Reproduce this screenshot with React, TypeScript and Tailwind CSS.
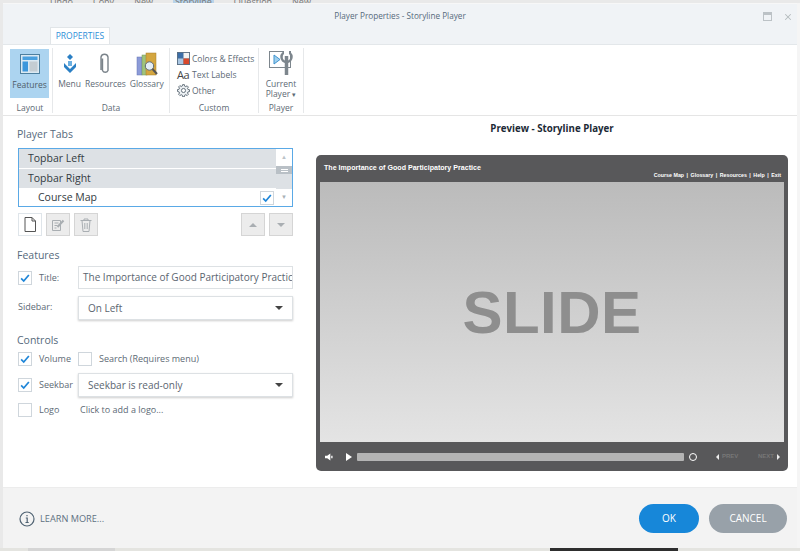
import { X } from "lucide-react";

const sans = "font-['Open_Sans','Liberation_Sans',sans-serif]";

function Check({ on = false }: { on?: boolean }) {
  return (
    <span className="flex size-[14px] shrink-0 items-center justify-center border border-[#cfd6dc] bg-white">
      {on ? (
        <svg viewBox="0 0 14 14" className="size-[12px]" fill="none" stroke="#1f86d8" strokeWidth="2">
          <path d="M2.5 7.5 5.5 10.5 11.5 3.5" />
        </svg>
      ) : null}
    </span>
  );
}

function Select({ label }: { label: string }) {
  return (
    <div className="flex h-[24px] w-[215px] items-center justify-between border border-[#dde1e4] bg-white px-[9px] text-[10px] text-[#5b6570] shadow-[0_1px_2px_rgba(0,0,0,0.2)]">
      <span>{label}</span>
      <span className="h-0 w-0 border-x-[4px] border-t-[4px] border-x-transparent border-t-[#444]" />
    </div>
  );
}

function SectionLabel({ children }: { children: string }) {
  return <div className="text-[10.5px] leading-[14px] text-[#566a7c]">{children}</div>;
}

function RibbonItem({ icon, label }: { icon: React.ReactNode; label: string }) {
  return (
    <div className="flex flex-col items-center">
      <div className="flex h-[26px] items-center justify-center">{icon}</div>
      <span className="text-[8.5px] leading-[13px] whitespace-nowrap text-[#5d6a75]">{label}</span>
    </div>
  );
}

function GroupLabel({ children }: { children: string }) {
  return <div className="text-center text-[8.5px] leading-[12px] text-[#5d6a75]">{children}</div>;
}

function FeaturesIcon() {
  return (
    <svg viewBox="0 0 20 20" className="size-[20px]">
      <rect x="0.5" y="0.5" width="19" height="19" fill="#dbe9f3" stroke="#4d7f9f" />
      <rect x="2.5" y="2.5" width="15" height="3.5" fill="#4aa0df" />
      <rect x="2.5" y="7.5" width="5.5" height="10" fill="#3d97dc" />
      <rect x="9.5" y="7.5" width="8" height="10" fill="#c4ccd2" />
    </svg>
  );
}

function MenuIcon() {
  return (
    <svg viewBox="0 0 14 20" className="h-[20px] w-[14px]" fill="none">
      <path d="M7 0 10 3 7 6 4 3Z" fill="#2a7fc4" />
      <path d="M5 7h4v5H5Z" fill="#6aaee0" />
      <path d="M1 9 7 15 13 9 13 13 7 19 1 13Z" fill="#2a7fc4" />
    </svg>
  );
}

function ClipIcon() {
  return (
    <svg viewBox="0 0 12 24" className="h-[24px] w-[12px]" fill="none" stroke="#7a838a" strokeWidth="1.4">
      <path d="M3.5 6.5v12a3 3 0 0 0 5.5 0V5a3.6 3.6 0 0 0-7 0v13" />
    </svg>
  );
}

function GlossaryIcon() {
  return (
    <svg viewBox="0 0 22 25" className="h-[25px] w-[22px]">
      <rect x="1" y="5" width="5" height="18" fill="#8c9bd8" stroke="#6475b4" strokeWidth="0.5" />
      <rect x="6" y="3" width="5" height="20" fill="#9fc37c" stroke="#74975a" strokeWidth="0.5" />
      <rect x="10" y="1" width="10" height="22" fill="#d4a63f" stroke="#a67e28" strokeWidth="0.5" />
      <circle cx="13.5" cy="14" r="4.2" fill="#e4eef5" stroke="#5d6a75" />
      <path d="M16.5 17 21 22" stroke="#555" strokeWidth="2" />
    </svg>
  );
}

function ColorsIcon() {
  return (
    <svg viewBox="0 0 14 14" className="size-[13px] shrink-0">
      <rect width="14" height="14" fill="#5b6f85" />
      <rect x="1" y="1" width="6" height="6" fill="#3c6ea8" />
      <rect x="7" y="1" width="6" height="6" fill="#f2f2f2" />
      <rect x="1" y="7" width="6" height="6" fill="#a9c6e2" />
      <rect x="7" y="7" width="6" height="6" fill="#d9482b" />
    </svg>
  );
}

function GearIcon() {
  return (
    <svg viewBox="0 0 14 14" className="size-[13px] shrink-0" fill="#eef2f5" stroke="#5d6a75" strokeWidth="1">
      <path d="M6 .7h2l.3 1.700 1.200.5 1.400-1 1.400 1.400-1 1.400.5 1.200 1.700.3v2l-1.700.3-.5 1.200 1 1.400-1.400 1.400-1.400-1-1.200.5-.3 1.700H6l-.3-1.700-1.200-.5-1.400 1-1.400-1.400 1-1.400-.5-1.200L.5 8V6l1.700-.3.5-1.200-1-1.400 1.400-1.400 1.400 1 1.200-.5Z" />
      <circle cx="7" cy="7" r="2.200" fill="#fff" />
    </svg>
  );
}

function PlayerIcon() {
  return (
    <svg viewBox="0 0 25 26" className="h-[26px] w-[25px] shrink-0" fill="none">
      <rect x="0.5" y="1.5" width="21" height="16" fill="#fff" stroke="#7d868d" />
      <path d="M5 5v9l6-4.500Z" fill="#9fd0ee" stroke="#3f93cf" />
      <circle cx="17.500" cy="7" r="5" stroke="#7d868d" strokeWidth="2.500" />
      <path d="M17.500 6v19" stroke="#7d868d" strokeWidth="3.500" />
      <path d="M15 0h5v6h-5Z" fill="#fff" />
    </svg>
  );
}

function SquareButton({ children, active = false }: { children: React.ReactNode; active?: boolean }) {
  return (
    <div
      className={
        "flex h-[23px] w-[24px] items-center justify-center border " +
        (active ? "border-[#dfe5ea] bg-white" : "border-[#d5d5d5] bg-[#ececec]")
      }
    >
      {children}
    </div>
  );
}

function ListRow({ label }: { label: string }) {
  return <div className="flex h-[19px] items-center bg-[#dde1e5] pl-[9px] text-[10.5px] text-[#333b42]">{label}</div>;
}

function RibbonSep() {
  return <div className="mt-[3px] h-[65px] w-px shrink-0 bg-[#e6e8ea]" />;
}

export default function App() {
  return (
    <div className={"flex h-[551px] w-[800px] flex-col overflow-hidden bg-[#e9e9e9] " + sans}>
      {/* what's left of the app behind the dialog */}
      <div className="flex h-[3px] shrink-0 gap-[20px] overflow-hidden pl-[50px] text-[9px] leading-[3px] text-[#777]">
        <span>Undo</span>
        <span>Copy</span>
        <span>New</span>
        <span className="bg-[#b9d4ea] px-[2px]">Storyline</span>
        <span>Question</span>
        <span>New</span>
      </div>

      <div className="flex min-h-0 flex-1 pl-[3px]">
        <div className="flex w-[794px] flex-col border-t border-[#f7f7f7] bg-white">
          {/* title bar + tab */}
          <div className="flex h-[41px] shrink-0 flex-col border-b border-[#e3e7ea] bg-[#f0f3f6]">
            <div className="flex h-[24px] items-center">
              <div className="w-[34px]" />
              <div className="flex-1 text-center text-[8.2px] leading-[22px] text-[#566a7c]">Player Properties - Storyline Player</div>
              <div className="flex w-[34px] items-center gap-[11px] pt-[2px]">
                <span className="size-[9px] border border-t-[3px] border-[#bcc2c6]" />
                <X className="size-[10px] text-[#b5bbbf]" strokeWidth={2.500} />
              </div>
            </div>
            <div className="ml-[47px] flex h-[17px] w-[60px] items-center justify-center border-x border-t border-[#e1e5e8] bg-white text-[8.5px] text-[#2e8fd8]">
              PROPERTIES
            </div>
          </div>

          {/* ribbon */}
          <div className="flex h-[71px] shrink-0 items-start border-b border-[#e5e5e5] pl-[5px]">
            <div className="w-[44px] pt-[4px]">
              <div className="ml-[2px] flex h-[49px] w-[39px] flex-col items-center bg-[#acd4f0] pt-[5px]">
                <FeaturesIcon />
                <span className="mt-[4px] text-[8.5px] leading-[13px] text-[#4f5d68]">Features</span>
              </div>
              <div className="mt-[4px]">
                <GroupLabel>Layout</GroupLabel>
              </div>
            </div>
            <RibbonSep />
            <div className="w-[116px] pt-[6px]">
              <div className="flex h-[46px] justify-center gap-[4px]">
                <RibbonItem icon={<MenuIcon />} label="Menu" />
                <RibbonItem icon={<ClipIcon />} label="Resources" />
                <RibbonItem icon={<GlossaryIcon />} label="Glossary" />
              </div>
              <div className="mt-[5px]">
                <GroupLabel>Data</GroupLabel>
              </div>
            </div>
            <RibbonSep />
            <div className="w-[88px] pt-[7px]">
              <div className="flex h-[45px] flex-col gap-[3px] pl-[7px] text-[8.5px] leading-[13px] whitespace-nowrap text-[#5d6a75]">
                <div className="flex items-center gap-[2px]">
                  <ColorsIcon />
                  Colors &amp; Effects
                </div>
                <div className="flex items-center gap-[2px]">
                  <span className="w-[13px] text-[11px] leading-[13px] tracking-[-0.5px] text-[#444]">Aa</span>
                  Text Labels
                </div>
                <div className="flex items-center gap-[2px]">
                  <GearIcon />
                  Other
                </div>
              </div>
              <div className="mt-[5px]">
                <GroupLabel>Custom</GroupLabel>
              </div>
            </div>
            <RibbonSep />
            <div className="w-[44px] pt-[5px]">
              <div className="flex h-[47px] flex-col items-center">
                <PlayerIcon />
                <div className="mt-[3px] text-center text-[8.5px] leading-[10px] whitespace-nowrap text-[#5d6a75]">
                  Current
                  <br />
                  Player <span className="text-[7px]">▾</span>
                </div>
              </div>
              <div className="mt-[5px]">
                <GroupLabel>Player</GroupLabel>
              </div>
            </div>
            <RibbonSep />
          </div>

          {/* body */}
          <div className="flex min-h-0 flex-1 pl-[14px]">
            <div className="flex w-[276px] shrink-0 flex-col pt-[11px]">
              <SectionLabel>Player Tabs</SectionLabel>
              <div className="mt-[7px] ml-[1px] flex h-[59px] border border-[#5aa9e6] bg-white">
                <div className="flex min-w-0 flex-1 flex-col">
                  <ListRow label="Topbar Left" />
                  <div className="h-px" />
                  <ListRow label="Topbar Right" />
                  <div className="flex h-[18px] items-center justify-between pt-[1px] pr-[2px] pl-[19px] text-[10.5px] text-[#333b42]">
                    Course Map
                    <Check on />
                  </div>
                </div>
                <div className="flex w-[16px] shrink-0 flex-col items-center">
                  <div className="flex h-[17px] w-full items-center justify-center text-[6px] text-[#bcc3c8]">▲</div>
                  <div className="flex h-[8px] w-full flex-col items-center justify-center gap-px bg-[#b9c0c6]">
                    <span className="h-px w-[7px] bg-white" />
                    <span className="h-px w-[7px] bg-white" />
                  </div>
                  <div className="h-[15px] w-full bg-[#dde1e5]" />
                  <div className="flex flex-1 items-center text-[6px] text-[#a8b0b6]">▼</div>
                </div>
              </div>

              <div className="mt-[6px] ml-[1px] flex gap-[4px]">
                <SquareButton active>
                  <svg viewBox="0 0 12 15" className="h-[15px] w-[12px]" fill="#fff" stroke="#555">
                    <path d="M1 .5h7l3.500 3.500v10.500H1Z" />
                    <path d="M8 .5V4h3.500" fill="none" />
                  </svg>
                </SquareButton>
                <SquareButton>
                  <svg viewBox="0 0 14 14" className="size-[14px]" fill="none" stroke="#a9aeb2">
                    <path d="M1.500 2.500h8v10h-8ZM3.500 5h4M3.500 7.500h3M3.500 10h2" />
                    <path d="M6.500 9 12.500 2.500" strokeWidth="2" />
                  </svg>
                </SquareButton>
                <SquareButton>
                  <svg viewBox="0 0 12 14" className="h-[14px] w-[12px]" fill="none" stroke="#a9aeb2">
                    <path d="M.5 2.500h11M4 2.500V1h4v1.500M2 2.500l1 11h6l1-11M4.800 5v6M7.200 5v6" />
                  </svg>
                </SquareButton>
                <div className="flex-1" />
                <SquareButton>
                  <span className="h-0 w-0 border-x-[4px] border-b-[4px] border-x-transparent border-b-[#a9aeb2]" />
                </SquareButton>
                <SquareButton>
                  <span className="h-0 w-0 border-x-[4px] border-t-[4px] border-x-transparent border-t-[#a9aeb2]" />
                </SquareButton>
              </div>

              <div className="mt-[12px]">
                <SectionLabel>Features</SectionLabel>
              </div>
              <div className="mt-[4px] flex h-[23px] items-center">
                <div className="ml-[1px] flex w-[60px] items-center gap-[7px] text-[9px] text-[#5d6a75]">
                  <Check on />
                  Title:
                </div>
                <div className="flex h-[23px] w-[215px] items-center overflow-hidden border border-[#dde1e4] pl-[4px] text-[10px] whitespace-nowrap text-[#5b6570]">
                  The Importance of Good Participatory Practice
                </div>
              </div>
              <div className="mt-[7px] flex items-center">
                <div className="ml-[1px] w-[60px] pb-[3px] text-[9px] text-[#5d6a75]">Sidebar:</div>
                <Select label="On Left" />
              </div>

              <div className="mt-[13px]">
                <SectionLabel>Controls</SectionLabel>
              </div>
              <div className="mt-[5px] flex h-[14px] items-center">
                <div className="ml-[1px] flex w-[60px] items-center gap-[7px] text-[9px] text-[#5d6a75]">
                  <Check on />
                  Volume
                </div>
                <Check />
                <span className="ml-[7px] text-[9px] text-[#5d6a75]">Search (Requires menu)</span>
              </div>
              <div className="mt-[7px] flex items-center">
                <div className="ml-[1px] flex w-[60px] items-center gap-[7px] text-[9px] text-[#5d6a75]">
                  <Check on />
                  Seekbar
                </div>
                <Select label="Seekbar is read-only" />
              </div>
              <div className="mt-[6px] flex h-[14px] items-center">
                <div className="ml-[1px] flex w-[62px] items-center gap-[7px] text-[9px] text-[#5d6a75]">
                  <Check />
                  Logo
                </div>
                <span className="text-[9px] text-[#5d6a75]">Click to add a logo...</span>
              </div>
            </div>

            {/* preview */}
            <div className="ml-[23px] flex w-[472px] flex-col pt-[6px]">
              <div className="text-center text-[9.7px] leading-[14px] font-bold text-[#1c2a36]">Preview - Storyline Player</div>
              <div className="mt-[19px] flex h-[316px] flex-col rounded-[5px] bg-[#58585a] px-[4px] font-['Liberation_Sans',sans-serif]">
                <div className="flex h-[27px] shrink-0 justify-between pr-[3px] pl-[4px] text-white">
                  <span className="pt-[7px] text-[7.1px] leading-[12px] font-bold">The Importance of Good Participatory Practice</span>
                  <span className="flex items-end gap-[2.5px] pb-[2px] text-[5.3px] leading-[9px] font-bold">
                    <span>Course Map</span>|<span>Glossary</span>|<span>Resources</span>|<span>Help</span>|<span>Exit</span>
                  </span>
                </div>
                <div className="flex h-[260px] shrink-0 items-center justify-center bg-linear-to-b from-[#bbbbbb] to-[#e4e4e4] pt-[2px]">
                  <span className="text-[60px] font-bold tracking-[0.5px] text-[#8e8e8e]">SLIDE</span>
                </div>
                <div className="flex flex-1 items-center pr-[4px] pl-[5px]">
                  <svg viewBox="0 0 9 9" className="size-[8px]" fill="#fff">
                    <path d="M0 3h2.500L6 .5v8L2.500 6H0Z" />
                    <path d="M7 3h1.500v3H7Z" />
                  </svg>
                  <span className="ml-[13px] h-0 w-0 border-y-[4px] border-l-[6px] border-y-transparent border-l-white" />
                  <div className="ml-[5px] h-[8px] w-[327px] rounded-[1px] bg-[#b4b4b4]" />
                  <span className="ml-[5px] size-[8px] rounded-full border-[1.500px] border-white" />
                  <span className="ml-[19px] h-0 w-0 border-y-[3px] border-r-[3px] border-y-transparent border-r-[#eee]" />
                  <span className="ml-[3px] text-[6px] font-bold text-[#777]">PREV</span>
                  <div className="flex-1" />
                  <span className="text-[6px] font-bold text-[#777]">NEXT</span>
                  <span className="ml-[3px] h-0 w-0 border-y-[3px] border-l-[3px] border-y-transparent border-l-[#eee]" />
                </div>
              </div>
            </div>
          </div>

          {/* footer */}
          <div className="flex h-[61px] shrink-0 items-center justify-between border-t border-[#ececec] bg-[#f3f3f3] pr-[10px] pl-[16px]">
            <div className="flex items-center gap-[5px] pt-[1px] text-[9.2px] text-[#5f7182]">
              <svg viewBox="0 0 16 16" className="size-[16px]" fill="none" stroke="#4f6272" strokeWidth="1.200">
                <circle cx="8" cy="8" r="7" />
                <path d="M6.800 7h1.400v4.500M6.500 11.500h3.200M8 4v1.300" />
              </svg>
              LEARN MORE...
            </div>
            <div className="flex gap-[10px] text-[10px] text-white">
              <div className="flex h-[29px] w-[60px] items-center justify-center rounded-full bg-[#1787d9]">OK</div>
              <div className="flex h-[29px] w-[78px] items-center justify-center rounded-full bg-[#98a1a9]">CANCEL</div>
            </div>
          </div>
        </div>
        <div className="flex-1 bg-[#f5f5f5]" />
      </div>

      <div className="flex h-[3px] shrink-0 bg-[#e4e4e0]">
        <div className="ml-[28px] w-[87px] bg-[#d5d5d5]" />
        <div className="w-[435px]" />
        <div className="w-[128px] bg-[#2e2e2e]" />
      </div>
    </div>
  );
}
